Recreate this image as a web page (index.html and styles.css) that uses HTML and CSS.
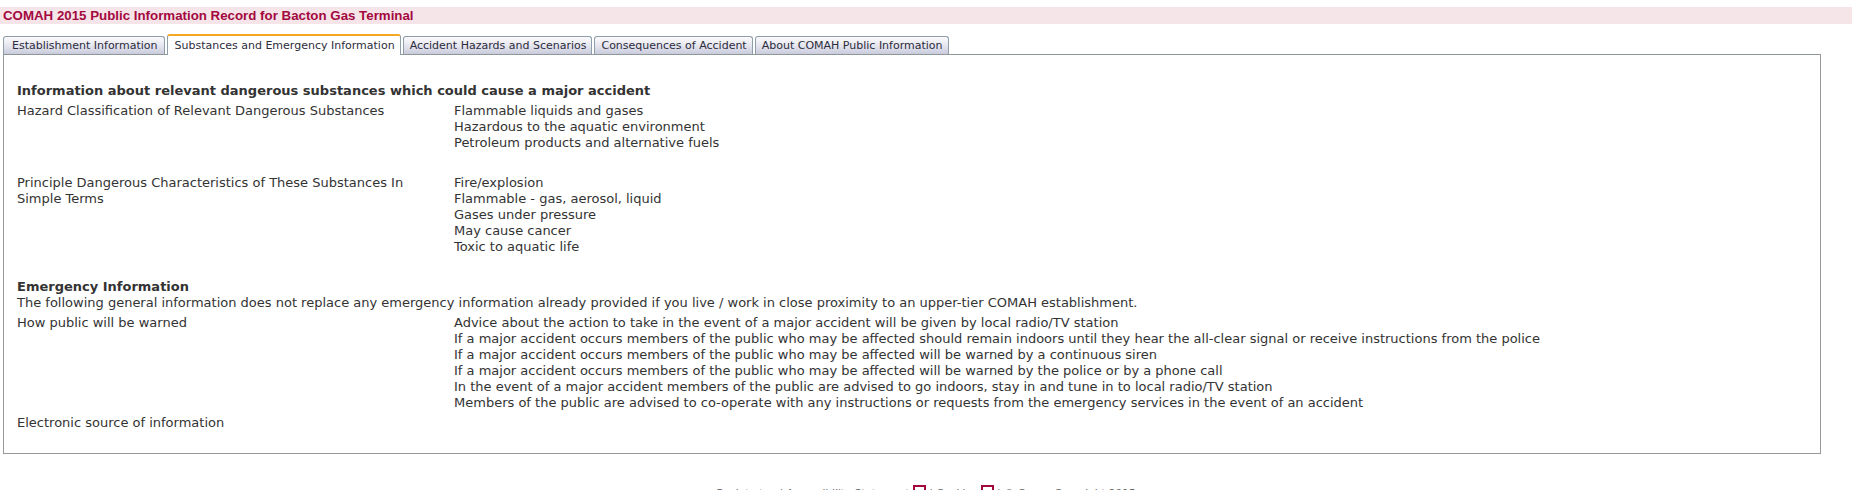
FILE: index.html
```html
<!DOCTYPE html>
<html lang="en">
<head>
  <title>COMAH 2015 Public Information Record for Bacton Gas Terminal</title>
  <meta charset="UTF-8">
  <link rel="stylesheet" href="styles.css">
</head>
<body>
<h1 class="title">COMAH 2015 Public Information Record for Bacton Gas Terminal</h1>
<ul class="tabs">
  <li class="tab">Establishment Information</li>
  <li class="tab active">Substances and Emergency Information</li>
  <li class="tab">Accident Hazards and Scenarios</li>
  <li class="tab">Consequences of Accident</li>
  <li class="tab">About COMAH Public Information</li>
</ul>
<div class="panel">
  <h3>Information about relevant dangerous substances which could cause a major accident</h3>
  <div class="row">
    <div class="label">Hazard Classification of Relevant Dangerous Substances</div>
    <div class="values">
      <div>Flammable liquids and gases</div>
      <div>Hazardous to the aquatic environment</div>
      <div>Petroleum products and alternative fuels</div>
    </div>
  </div>
  <div class="row spaced">
    <div class="label">Principle Dangerous Characteristics of These Substances In Simple Terms</div>
    <div class="values">
      <div>Fire/explosion</div>
      <div>Flammable - gas, aerosol, liquid</div>
      <div>Gases under pressure</div>
      <div>May cause cancer</div>
      <div>Toxic to aquatic life</div>
    </div>
  </div>
  <h3 class="spaced">Emergency Information</h3>
  <p class="note">The following general information does not replace any emergency information already provided if you live / work in close proximity to an upper-tier COMAH establishment.</p>
  <div class="row">
    <div class="label">How public will be warned</div>
    <div class="values">
      <div>Advice about the action to take in the event of a major accident will be given by local radio/TV station</div>
      <div>If a major accident occurs members of the public who may be affected should remain indoors until they hear the all-clear signal or receive instructions from the police</div>
      <div>If a major accident occurs members of the public who may be affected will be warned by a continuous siren</div>
      <div>If a major accident occurs members of the public who may be affected will be warned by the police or by a phone call</div>
      <div>In the event of a major accident members of the public are advised to go indoors, stay in and tune in to local radio/TV station</div>
      <div>Members of the public are advised to co-operate with any instructions or requests from the emergency services in the event of an accident</div>
    </div>
  </div>
  <div class="row">
    <div class="label">Electronic source of information</div>
    <div class="values"></div>
  </div>
</div>
<div class="footer">
  Back to top | Accessibility Statement <span class="ext"></span> | Cookies <span class="ext"></span> | &copy; Crown Copyright 2015
</div>
</body>
</html>
```

FILE: styles.css
```css
body {
  margin: 7px 0 0 0;
  font-family: "DejaVu Sans", Verdana, sans-serif;
  font-size: 13px;
  color: #333;
  background: #fff;
}
.title {
  margin: 0;
  padding: 0 3px;
  height: 17px;
  line-height: 17px;
  background: #f5e4e8;
  font-family: "Liberation Sans", Arial, sans-serif;
  font-size: 13.3px;
  font-weight: bold;
  color: #a3093f;
}
.tabs {
  display: flex;
  align-items: flex-end;
  list-style: none;
  margin: 10px 0 0 3px;
  padding: 0;
  height: 20px;
  gap: 2px;
}
.tab {
  height: 17px;
  line-height: 17px;
  padding: 0 5px 0 6px;
  font-size: 11px;
  color: #2c2c3c;
  border: 1px solid #8e9eab;
  border-bottom: none;
  border-radius: 3px 3px 0 0;
  background: linear-gradient(#fbfbfd, #e4e4ee 55%, #c9cbdc);
  white-space: nowrap;
}
.tab:first-child {
  padding: 0 7px 0 8px;
}
.tab.active {
  height: 19px;
  line-height: 19px;
  background: #fff;
  border-top: 2px solid #f5a623;
  margin-bottom: -1px;
  position: relative;
  z-index: 1;
}
.panel {
  margin: 0 31px 0 3px;
  border: 1px solid #999;
  border-top-color: #8f9898;
  padding: 28px 13px 18px 13px;
  line-height: 16px;
}
h3 {
  margin: 0 0 4px 0;
  font-size: 13px;
  line-height: 16px;
  font-weight: bold;
}
.spaced {
  margin-top: 24px;
}
.note {
  margin: -4px 0 4px 0;
}
.row {
  display: grid;
  grid-template-columns: 437px 1fr;
  margin-bottom: 4px;
}
.row .label {
  padding-right: 20px;
}
.values {
  min-height: 16px;
}
.footer {
  margin-top: 31px;
  text-align: center;
  font-size: 10.5px;
  line-height: 12px;
  color: #666;
}
.footer .first {
  letter-spacing: -0.2px;
}
.ext {
  display: inline-block;
  width: 9px;
  height: 9px;
  border: 2px solid #a3093f;
  vertical-align: -1px;
}
```
